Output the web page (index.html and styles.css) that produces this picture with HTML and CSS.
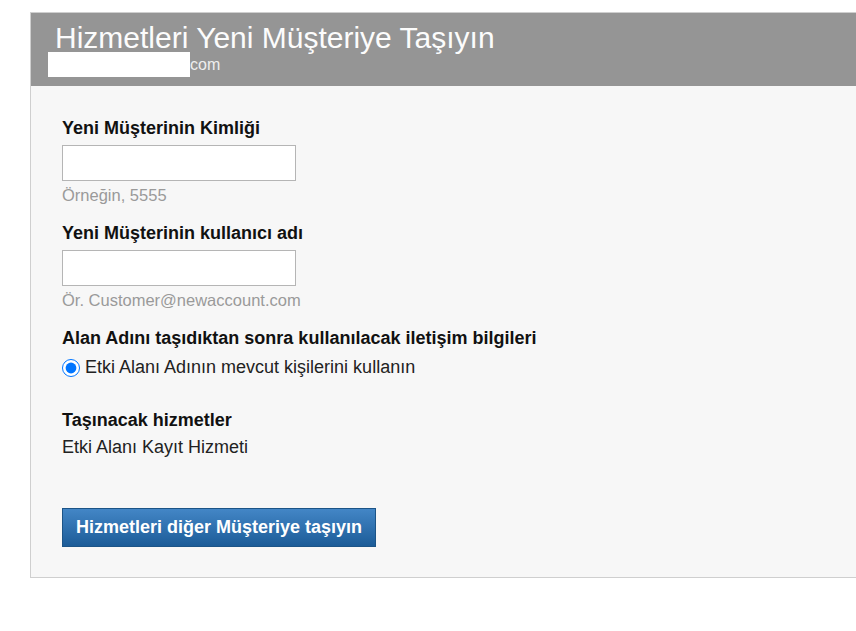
FILE: index.html
```html
<!DOCTYPE html>
<html lang="tr">
<head>
    <meta charset="UTF-8">
    <meta name="viewport" content="width=device-width, initial-scale=1.0">
    <title>Hizmetleri Yeni Müşteriye Taşıyın</title>
    <link rel="stylesheet" href="styles.css">
</head>
<body>

    <div class="panel">
        <!-- başlık -->
        <div class="panel-header">
            <h1>Hizmetleri Yeni Müşteriye Taşıyın</h1>
            <div class="domain"><span class="masked"></span>com</div>
        </div>

        <form class="panel-body" onsubmit="return false;">
            <div class="field">
                <label class="field-label" for="customer-id">Yeni Müşterinin Kimliği</label>
                <input type="text" id="customer-id" class="text-input">
                <p class="hint">Örneğin, 5555</p>
            </div>

            <div class="field">
                <label class="field-label" for="customer-user">Yeni Müşterinin kullanıcı adı</label>
                <input type="text" id="customer-user" class="text-input">
                <p class="hint">Ör. Customer@newaccount.com</p>
            </div>

            <div class="field">
                <p class="field-label">Alan Adını taşıdıktan sonra kullanılacak iletişim bilgileri</p>
                <label class="radio-row">
                    <input type="radio" name="contacts" checked>
                    <span>Etki Alanı Adının mevcut kişilerini kullanın</span>
                </label>
            </div>

            <div class="field services">
                <p class="field-label">Taşınacak hizmetler</p>
                <p class="service-name">Etki Alanı Kayıt Hizmeti</p>
            </div>

            <button type="submit" class="move-btn">Hizmetleri diğer Müşteriye taşıyın</button>
        </form>
    </div>

</body>
</html>
```

FILE: styles.css
```css
body {
    font-family: "Liberation Sans", Arial, sans-serif;
    background-color: #fff;
    margin: 0;
    padding: 0;
    overflow: hidden;
}

.panel {
    width: 860px;
    margin: 12px 0 0 30px;
    border: 1px solid #cfcfcf;
    background-color: #f7f7f7;
}

/* gri başlık alanı */
.panel-header {
    background-color: #959595;
    padding: 8px 0 9px 24px;
    color: #fcfcfc;
}

.panel-header h1 {
    margin: 0;
    font-size: 30px;
    font-weight: normal;
    line-height: 34px;
}

.domain {
    font-size: 16px;
    line-height: 20px;
    color: #eeeeee;
}

/* alan adının gizlenen kısmı */
.masked {
    display: inline-block;
    width: 142px;
    height: 25px;
    margin: -3px 0 0 -7px;
    vertical-align: -7px;
    background-color: #fff;
}

.panel-body {
    padding: 32px 0 30px 31px;
    margin: 0;
}

.field {
    margin-bottom: 18px;
}

.field-label {
    display: block;
    margin: 0 0 7px;
    font-size: 18px;
    font-weight: bold;
    line-height: 20px;
    color: #111;
}

.text-input {
    display: block;
    box-sizing: border-box;
    width: 234px;
    height: 36px;
    margin: 0;
    border: 1px solid #b5b5b5;
    background-color: #fff;
    font-size: 16px;
}

.hint {
    margin: 4px 0 0;
    font-size: 16.5px;
    line-height: 20px;
    color: #9a9a9a;
}

.radio-row {
    display: flex;
    align-items: center;
    gap: 5px;
    margin-top: 9px;
    font-size: 18px;
    line-height: 20px;
    color: #222;
}

.radio-row input {
    width: 18px;
    height: 18px;
    margin: 2px 0 0;
}

.services {
    margin-top: 33px;
}

.service-name {
    margin: 0;
    font-size: 18px;
    line-height: 20px;
    color: #222;
}

.move-btn {
    display: block;
    margin-top: 51px;
    padding: 8px 13px 9px;
    font-family: inherit;
    font-size: 18px;
    font-weight: bold;
    line-height: 20px;
    color: #fff;
    background: linear-gradient(#4386c6, #1c5c98);
    border: 1px solid #1c5487;
    border-radius: 0;
    cursor: pointer;
}

.move-btn:hover {
    background: linear-gradient(#3a7dbd, #174f85);
}
```
